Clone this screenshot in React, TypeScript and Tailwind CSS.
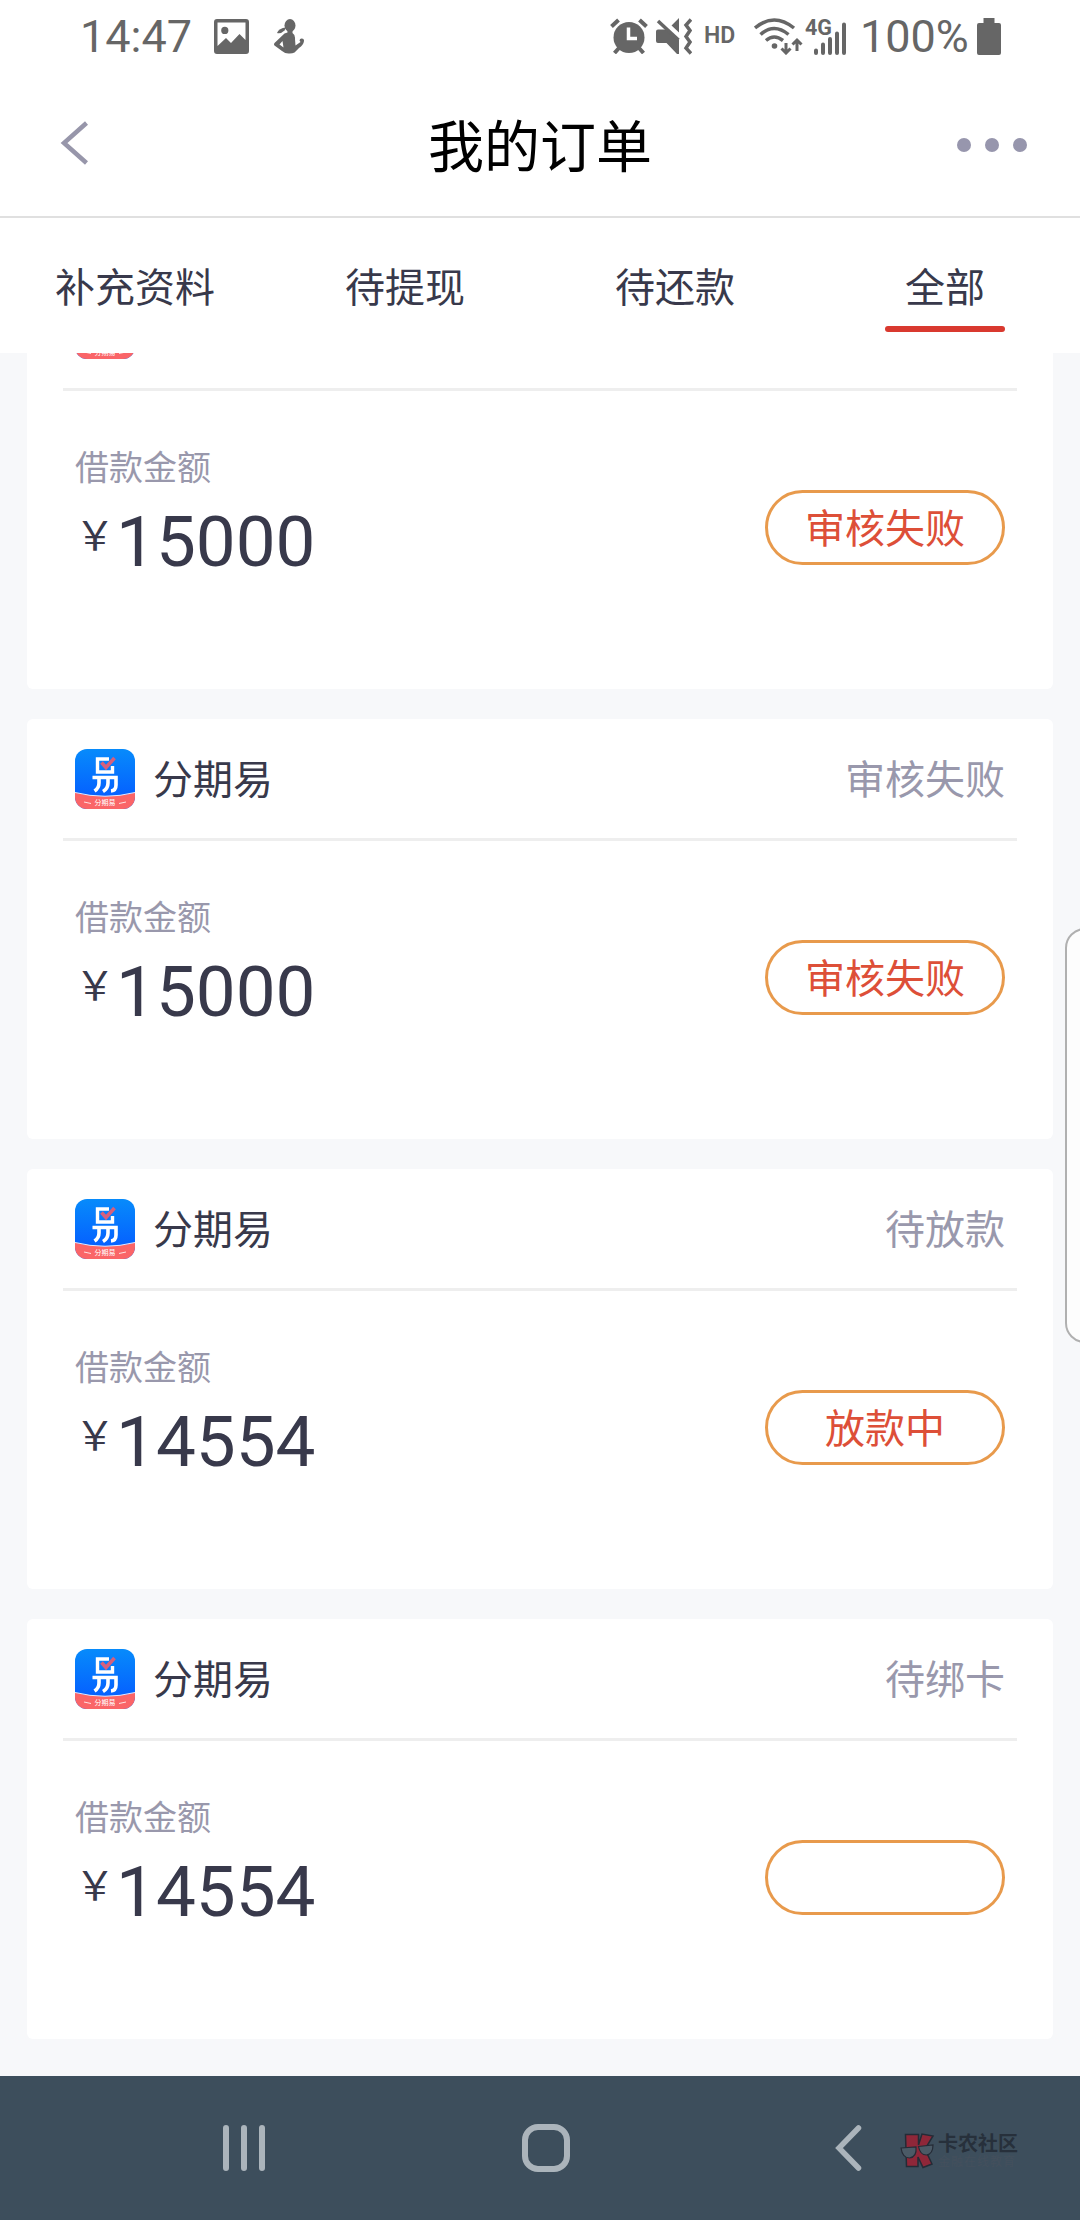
import React from "react";

interface Order {
  id: number;
  name: string;
  status: string;
  amount: string;
  action: string;
}

const orders: Order[] = [
  { id: 1, name: "", status: "", amount: "15000", action: "审核失败" },
  { id: 2, name: "分期易", status: "审核失败", amount: "15000", action: "审核失败" },
  { id: 3, name: "分期易", status: "待放款", amount: "14554", action: "放款中" },
  { id: 4, name: "分期易", status: "待绑卡", amount: "14554", action: "" },
];

const tabs = ["补充资料", "待提现", "待还款", "全部"];

const StatusBar = () => {
  return (
    <div className="h-[72px] pl-[80px] pr-[79px] flex items-center justify-between text-[#666666]">
      <div className="flex items-center">
        <span className="text-[45px] leading-[72px] w-[134px] pt-[1px]">14:47</span>
        <svg width="35" height="35" viewBox="0 0 35 35" fill="currentColor">
          <path
            fillRule="evenodd"
            d="M3 0H32Q35 0 35 3V32Q35 35 32 35H3Q0 35 0 32V3Q0 0 3 0ZM3.5 3.5V27L12 19L17 24L25.5 15L31.5 21V3.5ZM10.8 7.8A3.6 3.6 0 1 1 10.8 15A3.6 3.6 0 1 1 10.8 7.8Z"
          />
        </svg>
        <svg className="ml-[25px]" width="30" height="35" viewBox="0 0 30 35" fill="currentColor">
          <ellipse cx="16" cy="6.5" rx="5.5" ry="6.5" />
          <path d="M3 14Q5 9 12 8.5L10.5 11.5Q7 15 3 14Z" />
          <path
            fillRule="evenodd"
            d="M13.5 10H18.5V14Q21.5 16 21 20L21.5 26.500L26.5 23L25.5 21.500A2 2 0 0 1 30 22Q29.500 26 25 29L20.500 33.500Q18 34.800 14.500 34.500Q11 34.500 8 32L0.500 26.500Q-0.500 25.500 0.500 24L10.500 14.500L13.500 13.500ZM8.500 22L5.500 25.500L9.500 28.500Z"
          />
        </svg>
      </div>
      <div className="flex items-center">
        <svg width="38" height="36" viewBox="0 0 38 36" fill="none" stroke="currentColor">
          <circle cx="19" cy="19.500" r="15.500" fill="currentColor" stroke="none" />
          <path d="M1.500 8.500L8.500 2M29.500 2L36.500 8.500M9 30L4.500 35M29 30L33.500 35" strokeWidth="4" />
          <path d="M18.500 9.500V20.500H27" stroke="#ffffff" strokeWidth="3.500" />
        </svg>
        <svg className="ml-[8px]" width="36" height="37" viewBox="0 0 36 37">
          <path d="M2 11.500H9.500L13 13.500L23 22V36H21L10.500 25H2Q0 25 0 23V13.500Q0 11.500 2 11.500ZM23 0V14.500L15.500 7.500Z" fill="currentColor" />
          <path d="M2 3L22.500 22" stroke="currentColor" strokeWidth="3.500" />
          <path d="M35 1.500L30 7L34 12.500L30 18.500L34 24L30 30L35 35.500" fill="none" stroke="currentColor" strokeWidth="3.500" />
        </svg>
        <span className="ml-[12px] w-[33px] text-[23px] font-semibold">HD</span>
        <svg className="ml-[17px]" width="49" height="37" viewBox="0 0 49 37" fill="none" stroke="currentColor" strokeWidth="3.500">
          <path d="M1 10Q20 -6 40 10M6.500 16.500Q20 4.500 34.500 16.500M12 22.500Q20 15.500 29 22.500" />
          <circle cx="20.500" cy="28" r="2.800" fill="currentColor" stroke="none" />
          <path d="M32 25V34M27.500 30.500L32 35L36.500 30.500M43 33V24M38.500 26.500L43 22L47.500 26.500" strokeWidth="3" />
        </svg>
        <svg className="ml-[2px] overflow-visible" width="44" height="37" viewBox="0 0 44 37">
          <text x="0" y="16.500" fontSize="21.500" fontWeight="700" fill="currentColor">4G</text>
          <path d="M11 32.500V35M18 26.500V35M25 21V35M32 15.500V35M39 6.500V35" stroke="currentColor" strokeWidth="4" strokeLinecap="round" />
        </svg>
        <span className="ml-[11px] w-[117px] text-[45px] leading-[72px] pt-[1px]">100%</span>
        <svg width="24" height="37" viewBox="0 0 24 37" fill="currentColor">
          <path d="M6.500 0H17.500V5H22Q24 5 24 7V35Q24 37 22 37H2Q0 37 0 35V7Q0 5 2 5H6.500Z" />
        </svg>
      </div>
    </div>
  );
};

const Header = () => {
  return (
    <header className="h-[146px] border-b-2 border-[#e0e0e0] px-[53px] flex items-center justify-between">
      <svg width="100" height="46" viewBox="0 0 100 46" fill="none">
        <path d="M33.500 2L11 22L33.500 42" stroke="#9796aa" strokeWidth="4.500" />
      </svg>
      <h1 className="pt-[7px] text-[56px] leading-[72px] text-black">我的订单</h1>
      <div className="w-[100px] pt-[1px] flex justify-end gap-[14px]">
        <span className="size-[14px] rounded-full bg-[#9796ad]" />
        <span className="size-[14px] rounded-full bg-[#9796ad]" />
        <span className="size-[14px] rounded-full bg-[#9796ad]" />
      </div>
    </header>
  );
};

const Tabs = ({ active }: { active: string }) => {
  return (
    <nav className="h-[135px] grid grid-cols-4 text-[40px] text-[#38394b]">
      {tabs.map((tab) => (
        <div key={tab} className="flex flex-col items-center pt-[41px]">
          <span className="leading-[60px]">{tab}</span>
          {tab === active && (
            <span className="mt-[7px] w-[120px] h-[6px] rounded-full bg-[#d9392f]" />
          )}
        </div>
      ))}
    </nav>
  );
};

const AppLogo = () => {
  return (
    <svg width="60" height="60" viewBox="0 0 60 60">
      <defs>
        <linearGradient id="logoBlue" x1="0" y1="0" x2="0" y2="1">
          <stop offset="0" stopColor="#078bfb" />
          <stop offset="0.8" stopColor="#0560ff" />
        </linearGradient>
        <clipPath id="logoClip">
          <rect width="60" height="60" rx="12" />
        </clipPath>
      </defs>
      <g clipPath="url(#logoClip)">
        <rect width="60" height="60" fill="url(#logoBlue)" />
        <path d="M0 43.500Q30 51 60 43.500V60H0Z" fill="#fa6568" />
        <path d="M0 43.500Q30 51 60 43.500" fill="none" stroke="#e4e9ff" strokeWidth="1" />
      </g>
      <path d="M34 10H22.500V23H37.500V17" fill="none" stroke="#ffffff" strokeWidth="3.400" />
      <path d="M17.500 28.500H41V36Q41 41.500 36 42M24 29V34Q24 39 19.500 42M33 29V34Q33 39.500 28 42.500" fill="none" stroke="#ffffff" strokeWidth="3.600" />
      <path d="M26.500 13.500L31 18.500L39.500 9" fill="none" stroke="#d65f7c" strokeWidth="3.600" />
      <text x="30" y="56" fontSize="7" textAnchor="middle" fill="#ffffff">分期易</text>
      <path d="M9 53L16 54.500M51 53L44 54.500" stroke="#ffffff" strokeWidth="0.800" />
    </svg>
  );
};

const OrderCard = ({ order }: { order: Order }) => {
  return (
    <li className="h-[420px] shrink-0 bg-white rounded-[6px] px-9">
      <div className="h-[122px] border-b-[3px] border-[#eeeeee] px-3 flex items-center justify-between text-[40px]">
        <div className="flex items-center gap-[18px] text-[#38394b]">
          <AppLogo />
          <span className="pt-[4px] leading-[60px]">{order.name}</span>
        </div>
        <span className="pt-[4px] leading-[60px] text-[#9998ac]">{order.status}</span>
      </div>
      <div className="px-3 pt-[51px] flex justify-between">
        <div className="flex flex-col">
          <span className="text-[34px] leading-[52px] text-[#9998ac]">借款金额</span>
          <div className="flex items-start text-[#38394b]">
            <span className="w-[41px] pt-[13px] text-[40px] leading-[60px]">￥</span>
            <span className="text-[71px] leading-[96px]">{order.amount}</span>
          </div>
        </div>
        <button className="mt-[48px] w-[240px] h-[75px] pt-[5px] rounded-full border-[3px] border-[#e89a4c] text-[40px] leading-[60px] text-[#dd4f38]">
          {order.action}
        </button>
      </div>
    </li>
  );
};

const NavBar = () => {
  return (
    <footer className="h-[144px] bg-[#3d4e5c] pl-[223px] pr-[60px] flex items-center">
      <svg width="42" height="46" viewBox="0 0 42 46" stroke="#abb4bb" strokeWidth="6" strokeLinecap="round">
        <path d="M3 3V43M21 3V43M39 3V43" />
      </svg>
      <span className="ml-[257px] size-12 rounded-[16px] border-[6px] border-[#abb4bb]" />
      <svg className="ml-[265px]" width="27" height="46" viewBox="0 0 27 46" fill="none">
        <path d="M23.500 3L4 23L23.500 43" stroke="#abb4bb" strokeWidth="5.500" strokeLinecap="round" />
      </svg>
      <div className="ml-[38px] pt-[5px] flex items-center gap-[3px]">
        <svg width="35" height="36" viewBox="0 0 35 36">
          <path d="M5.500 1.500H18.500V12L22 1L33 3L25 16L32 31L23 34.500L18 24V33.500H6.500Z" fill="#8f2739" stroke="#252b36" strokeWidth="1.500" />
          <path d="M1 15L16 14Q17 24 9.500 25Q2.500 25 1 15ZM18.500 13.500L33 12Q33 21 26.500 22Q20 22 18.500 13.500Z" fill="#4b5a66" stroke="#252b36" strokeWidth="1.200" />
        </svg>
        <div className="flex flex-col pt-[3px]">
          <span className="text-[20px] leading-[20px] font-bold text-[#27303b]">卡农社区</span>
          <span className="text-[12px] leading-[16px] tracking-[1px] text-[#44505c]">金融在线教育</span>
        </div>
      </div>
    </footer>
  );
};

const App = () => {
  return (
    <div className="relative w-[1080px] h-[2220px] overflow-hidden flex flex-col bg-white font-[Roboto,Noto_Sans_CJK_SC,sans-serif]">
      <StatusBar />
      <Header />
      <Tabs active="全部" />
      <main className="h-[1723px] bg-[#f7f8fa] px-[27px] overflow-hidden">
        {/* list is scrolled, so the first card starts above the viewport */}
        <ul className="-mt-[84px] flex flex-col gap-[30px]">
          {orders.map((order) => (
            <OrderCard key={order.id} order={order} />
          ))}
        </ul>
      </main>
      <NavBar />
      {/* edge panel handle */}
      <div className="absolute top-[928px] left-[1065px] w-[40px] h-[415px] rounded-[22px] border-2 border-[#b0b0b0] bg-[#fdfdfd]" />
    </div>
  );
};

export default App;
